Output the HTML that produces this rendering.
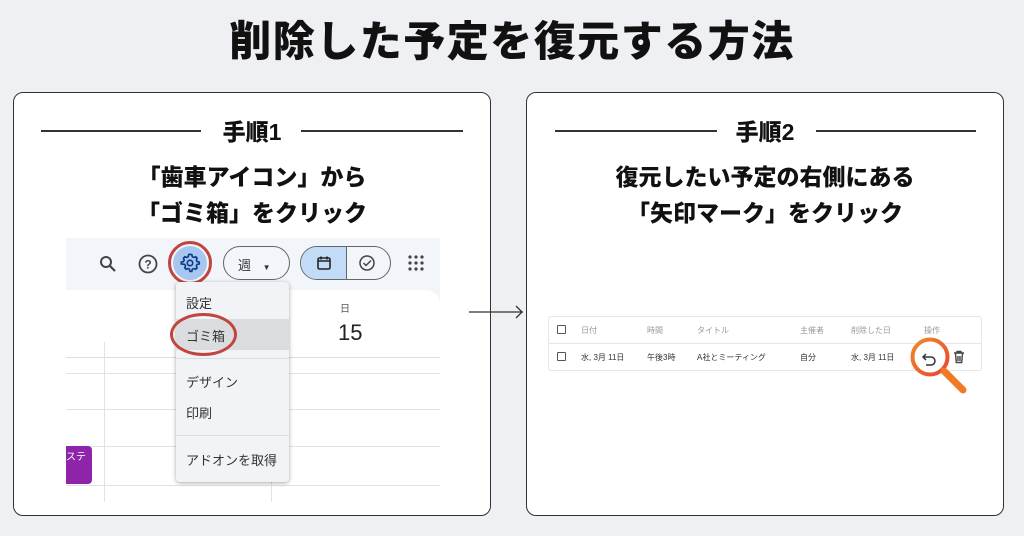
<!DOCTYPE html>
<html><head><meta charset="utf-8"><style>
*{margin:0;padding:0;box-sizing:border-box}
body{width:1024px;height:536px;background:#eef0f3;font-family:"Liberation Sans","Noto Sans CJK JP",sans-serif;position:relative;overflow:hidden;color:#111}
.abs{position:absolute}
h1{position:absolute;left:0;width:1024px;top:8px;text-align:center;font-size:42px;font-weight:900;letter-spacing:1.5px;color:#111}
.card{position:absolute;top:92px;width:478px;height:424px;background:#fff;border:1.5px solid #333;border-radius:10px;overflow:hidden}
.step{position:absolute;top:20px;left:0;width:100%;text-align:center;font-size:23px;font-weight:900}
.line{position:absolute;top:37px;height:1.5px;background:#333}
.txt{position:absolute;left:0;width:100%;text-align:center;font-size:23px;font-weight:900;line-height:36px;top:66px}
.sm{font-size:13px;color:#333}
.row{position:absolute;left:548px;width:434px;font-size:8px;color:#999}
.cb{position:absolute;width:9px;height:9px;border:1.3px solid #555;border-radius:1px}
</style></head><body>
<h1>削除した予定を復元する方法</h1>

<div class="card" style="left:13px">
  <div class="line" style="left:27px;width:160px"></div>
  <div class="line" style="left:287px;width:162px"></div>
  <div class="step">手順1</div>
  <div class="txt">「歯車アイコン」から<br>「ゴミ箱」をクリック</div>
</div>
<div class="abs" style="left:66px;top:238px;width:374px;height:262px;background:#f2f5f9"></div>
<div class="abs" style="left:66px;top:290px;width:374px;height:210px;background:#fff;border-top-right-radius:14px"></div>
<div class="abs" style="left:66px;top:357px;width:374px;height:1px;background:#ddd"></div>
<div class="abs" style="left:66px;top:373px;width:374px;height:1px;background:#e2e2e2"></div>
<div class="abs" style="left:66px;top:409px;width:374px;height:1px;background:#e2e2e2"></div>
<div class="abs" style="left:66px;top:446px;width:374px;height:1px;background:#e2e2e2"></div>
<div class="abs" style="left:66px;top:485px;width:374px;height:1px;background:#e2e2e2"></div>
<div class="abs" style="left:104px;top:342px;width:1px;height:160px;background:#e2e2e2"></div>
<div class="abs" style="left:271px;top:357px;width:1px;height:145px;background:#e2e2e2"></div>
<div class="abs" style="left:66px;top:446px;width:26px;height:38px;background:#8e24aa;border-radius:0 4px 4px 0;color:#fff;font-size:10px;padding-top:2px">ステ</div>
<div class="abs" style="left:340px;top:300px;font-size:10px;color:#555">日</div>
<div class="abs" style="left:338px;top:320px;font-size:22px;color:#222">15</div>
<svg class="abs" style="left:98px;top:254px" width="20" height="20" viewBox="0 0 20 20"><circle cx="8" cy="8" r="5" fill="none" stroke="#444" stroke-width="2"/><path d="M12 12l5 5" stroke="#444" stroke-width="2.2"/></svg>
<svg class="abs" style="left:137px;top:253px" width="22" height="22" viewBox="0 0 22 22"><circle cx="11" cy="11" r="8.5" fill="none" stroke="#444" stroke-width="1.8"/><text x="11" y="15.5" font-size="12" text-anchor="middle" fill="#444" font-family="Liberation Sans" font-weight="bold">?</text></svg>
<div class="abs" style="left:168px;top:241px;width:44px;height:44px;border-radius:50%;border:3px solid #c0453e"></div>
<div class="abs" style="left:173px;top:246px;width:34px;height:34px;border-radius:50%;background:#a8c7f0"></div>
<svg class="abs" style="left:179px;top:252px" width="22" height="22" viewBox="0 0 24 24"><path d="M12 2.5l2 .3.5 2.3 1.6.9 2.2-.8 1.4 1.5-.8 2.2.9 1.6 2.3.5v2l-2.3.5-.9 1.6.8 2.2-1.4 1.5-2.2-.8-1.6.9-.5 2.3h-2l-.5-2.3-1.6-.9-2.2.8-1.4-1.5.8-2.2-.9-1.6L2.5 13v-2l2.3-.5.9-1.6-.8-2.2 1.4-1.5 2.2.8 1.6-.9.5-2.3z" fill="none" stroke="#0b3c8a" stroke-width="1.8"/><circle cx="12" cy="12" r="3" fill="none" stroke="#0b3c8a" stroke-width="1.8"/></svg>
<div class="abs" style="left:223px;top:246px;width:67px;height:34px;border:1.3px solid #666;border-radius:17px;font-size:13px;padding:8px 0 0 14px;color:#333">週 <span style="font-size:8px;margin-left:8px">▼</span></div>
<div class="abs" style="left:300px;top:246px;width:91px;height:34px;border:1.3px solid #666;border-radius:17px;overflow:hidden">
  <div class="abs" style="left:0;top:0;width:46px;height:34px;background:#c2dbf7;border-right:1.3px solid #666"></div>
  <svg class="abs" style="left:15px;top:8px" width="16" height="16" viewBox="0 0 16 16"><rect x="2" y="3" width="12" height="11" rx="1.5" fill="none" stroke="#222" stroke-width="1.6"/><path d="M2 6h12M5 1.5v3M11 1.5v3" stroke="#222" stroke-width="1.6"/></svg>
  <svg class="abs" style="left:57px;top:7px" width="18" height="18" viewBox="0 0 18 18"><circle cx="9" cy="9" r="7" fill="none" stroke="#444" stroke-width="1.5"/><path d="M5.5 9l2.5 2.5 5-5" fill="none" stroke="#444" stroke-width="1.5"/></svg>
</div>
<svg class="abs" style="left:408px;top:255px" width="16" height="16" viewBox="0 0 16 16" fill="#444"><circle cx="2" cy="2" r="1.6"/><circle cx="8" cy="2" r="1.6"/><circle cx="14" cy="2" r="1.6"/><circle cx="2" cy="8" r="1.6"/><circle cx="8" cy="8" r="1.6"/><circle cx="14" cy="8" r="1.6"/><circle cx="2" cy="14" r="1.6"/><circle cx="8" cy="14" r="1.6"/><circle cx="14" cy="14" r="1.6"/></svg>
<div class="abs" style="left:176px;top:282px;width:113px;height:200px;background:#f1f3f6;border-radius:4px;box-shadow:0 1px 4px rgba(0,0,0,.35)">
  <div class="abs sm" style="left:10px;top:11px">設定</div>
  <div class="abs" style="left:0;top:37px;width:113px;height:31px;background:#dadce0"></div>
  <div class="abs sm" style="left:10px;top:44px">ゴミ箱</div>
  <div class="abs" style="left:0;top:76px;width:113px;height:1px;background:#dcdcdc"></div>
  <div class="abs sm" style="left:10px;top:90px">デザイン</div>
  <div class="abs sm" style="left:10px;top:121px">印刷</div>
  <div class="abs" style="left:0;top:153px;width:113px;height:1px;background:#dcdcdc"></div>
  <div class="abs sm" style="left:10px;top:168px">アドオンを取得</div>
</div>
<div class="abs" style="left:170px;top:313px;width:67px;height:43px;border-radius:50%;border:3px solid #c0453e"></div>

<svg class="abs" style="left:468px;top:304px" width="58" height="16" viewBox="0 0 58 16"><path d="M1 8h54M48 2l6 6-6 6" fill="none" stroke="#333" stroke-width="1.3"/></svg>

<div class="card" style="left:526px">
  <div class="line" style="left:28px;width:162px"></div>
  <div class="line" style="left:289px;width:160px"></div>
  <div class="step">手順2</div>
  <div class="txt">復元したい予定の右側にある<br>「矢印マーク」をクリック</div>
</div>
<div class="abs" style="left:548px;top:316px;width:434px;height:55px;border:1px solid #e6e6e6;border-radius:3px;background:#fff"></div>
<div class="abs" style="left:548px;top:343px;width:434px;height:1px;background:#e6e6e6"></div>
<div class="cb" style="left:557px;top:325px"></div>
<div class="cb" style="left:557px;top:352px"></div>
<div class="row" style="top:325px">
<span class="abs" style="left:33px">日付</span><span class="abs" style="left:99px">時間</span><span class="abs" style="left:149px">タイトル</span><span class="abs" style="left:252px">主催者</span><span class="abs" style="left:303px">削除した日</span><span class="abs" style="left:376px">操作</span></div>
<div class="row" style="top:352px;color:#333">
<span class="abs" style="left:33px">水, 3月 11日</span><span class="abs" style="left:99px">午後3時</span><span class="abs" style="left:149px">A社とミーティング</span><span class="abs" style="left:252px">自分</span><span class="abs" style="left:303px">水, 3月 11日</span></div>
<svg class="abs" style="left:907px;top:335px" width="64" height="64" viewBox="0 0 64 64"><defs><linearGradient id="g" x1="0" y1="0" x2="1" y2="1"><stop offset="0" stop-color="#f08a2c"/><stop offset="1" stop-color="#e9452e"/></linearGradient></defs><circle cx="23" cy="22" r="17.5" fill="#fff" stroke="url(#g)" stroke-width="4"/><path d="M37 36l19 19" stroke="#f07a26" stroke-width="7" stroke-linecap="round"/><path d="M19 19l-3 3 3 3M16 22h8a4 4 0 0 1 0 8h-5" fill="none" stroke="#333" stroke-width="1.5"/></svg>
<svg class="abs" style="left:953px;top:350px" width="12" height="14" viewBox="0 0 12 14"><path d="M1 3h10M4 3V1.5h4V3M2.5 3.5l.8 9h5.4l.8-9M5 6v5M7 6v5" fill="none" stroke="#444" stroke-width="1.4"/></svg>
</body></html>
